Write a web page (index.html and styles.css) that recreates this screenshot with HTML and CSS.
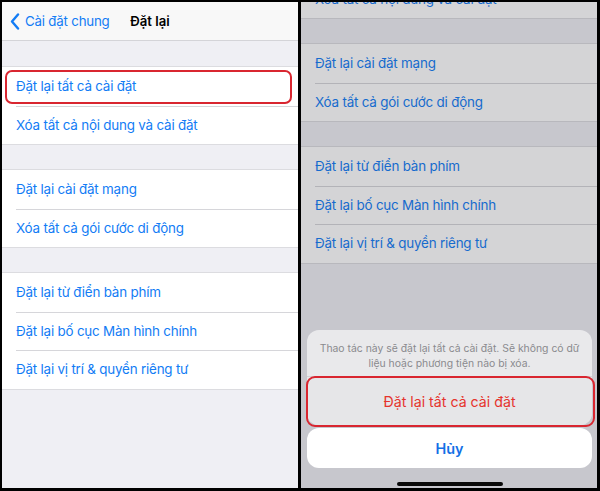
FILE: index.html
```html
<!DOCTYPE html>
<html lang="vi">
<head>
<meta charset="utf-8">
<link rel="stylesheet" href="styles.css">
</head>
<body>
<div class="frame">
  <section class="panel panel-left">
    <header class="nav">
      <div class="back">
        <svg class="chev" width="10" height="17" viewBox="0 0 10 17"><polyline points="8,1.5 2,8.5 8,15.5" fill="none" stroke="#127cf5" stroke-width="2.4" stroke-linecap="round" stroke-linejoin="round"/></svg>
        <span>Cài đặt chung</span>
      </div>
      <div class="title">Đặt lại</div>
    </header>
    <div class="list">
      <div class="group">
        <div class="row">Đặt lại tất cả cài đặt<span class="mark mark-row"></span></div>
        <div class="row">Xóa tất cả nội dung và cài đặt</div>
      </div>
      <div class="group">
        <div class="row">Đặt lại cài đặt mạng</div>
        <div class="row">Xóa tất cả gói cước di động</div>
      </div>
      <div class="group">
        <div class="row">Đặt lại từ điển bàn phím</div>
        <div class="row">Đặt lại bố cục Màn hình chính</div>
        <div class="row">Đặt lại vị trí &amp; quyền riêng tư</div>
      </div>
    </div>
  </section>
  <section class="panel panel-right">
    <div class="list list-scrolled">
      <div class="group">
        <div class="row">Đặt lại tất cả cài đặt</div>
        <div class="row">Xóa tất cả nội dung và cài đặt</div>
      </div>
      <div class="group">
        <div class="row">Đặt lại cài đặt mạng</div>
        <div class="row">Xóa tất cả gói cước di động</div>
      </div>
      <div class="group">
        <div class="row">Đặt lại từ điển bàn phím</div>
        <div class="row">Đặt lại bố cục Màn hình chính</div>
        <div class="row">Đặt lại vị trí &amp; quyền riêng tư</div>
      </div>
    </div>
    <div class="dim"></div>
    <div class="sheet">
      <div class="sheet-card">
        <div class="sheet-msg">Thao tác này sẽ đặt lại tất cả cài đặt. Sẽ không có dữ<br>liệu hoặc phương tiện nào bị xóa.</div>
        <div class="sheet-btn destructive">Đặt lại tất cả cài đặt<span class="mark mark-btn"></span></div>
      </div>
      <div class="sheet-cancel">Hủy</div>
    </div>
    <div class="home"></div>
  </section>
</div>
</body>
</html>
```
FILE: styles.css
```css
* { box-sizing: border-box; }
html, body { margin: 0; padding: 0; }
body {
  background: #000;
  font-family: Inter, "Noto Sans", "Liberation Sans", sans-serif;
  width: 600px;
  height: 491px;
  overflow: hidden;
}
.frame {
  display: flex;
  gap: 3px;
  padding: 2px 3px 3px 2px;
  height: 491px;
}
.panel {
  position: relative;
  width: 296px;
  height: 486px;
  overflow: hidden;
  background: #efeff4;
}
.nav {
  position: relative;
  height: 39px;
  background: #f8f8f8;
  border-bottom: 1px solid #d4d4d8;
  display: flex;
  align-items: center;
}
.back {
  display: flex;
  align-items: center;
  gap: 5px;
  padding-left: 8px;
  color: #127cf5;
  font-size: 13.3px;
  letter-spacing: -0.2px;
}
.chev { display: block; }
.title {
  position: absolute;
  left: 0; right: 0;
  top: 0; bottom: 0;
  display: flex;
  align-items: center;
  justify-content: center;
  font-size: 13.2px;
  font-weight: 600;
  color: #000;
  pointer-events: none;
}
.list { display: flex; flex-direction: column; }
.list-scrolled { margin-top: -87px; }
.group {
  margin-top: 26px;
  background: #fff;
  box-shadow: 0 -1px 0 #dcdce0, 0 1px 0 #dcdce0;
}
.row {
  position: relative;
  height: 38.5px;
  display: flex;
  align-items: center;
  padding-left: 14px;
  font-size: 13.4px;
  color: #127cf5;
  letter-spacing: -0.2px;
}
.row + .row {
  background-image: linear-gradient(#d6d6da, #d6d6da);
  background-size: calc(100% - 14px) 1px;
  background-position: right top;
  background-repeat: no-repeat;
}
.mark {
  position: absolute;
  border: 2px solid #d92630;
  pointer-events: none;
}
.mark-row {
  left: 3px; right: 6px; top: 3px; bottom: 2px;
  border-radius: 7px;
}
.dim {
  position: absolute;
  inset: 0;
  background: rgba(40, 40, 50, 0.2);
}
.sheet {
  position: absolute;
  left: 6px;
  right: 5px;
  top: 328px;
  display: flex;
  flex-direction: column;
  gap: 3px;
}
.sheet-card {
  background: #e9e9eb;
  border-radius: 12px;
}
.sheet-msg {
  height: 47px;
  display: flex;
  align-items: center;
  justify-content: center;
  text-align: center;
  font-size: 10.4px;
  line-height: 15px;
  color: #8a8a8e;
  padding: 5px 8px 0;
  border-bottom: 1px solid #d2d2d5;
}
.sheet-btn {
  position: relative;
  height: 48px;
  display: flex;
  align-items: center;
  justify-content: center;
  font-size: 14.2px;
  color: #e5342d;
  background: #e6e6e8;
  border-radius: 0 0 12px 12px;
}
.mark-btn {
  left: -1px; right: -3px; top: -1px; bottom: -2px;
  border-radius: 9px;
}
.sheet-cancel {
  height: 40px;
  background: #fff;
  border-radius: 12px;
  display: flex;
  align-items: center;
  justify-content: center;
  font-size: 14.4px;
  font-weight: 600;
  color: #1370e6;
}
.home {
  position: absolute;
  left: 96px;
  width: 106px;
  bottom: 2px;
  height: 4px;
  border-radius: 2px;
  background: #0a0a0a;
}
```
